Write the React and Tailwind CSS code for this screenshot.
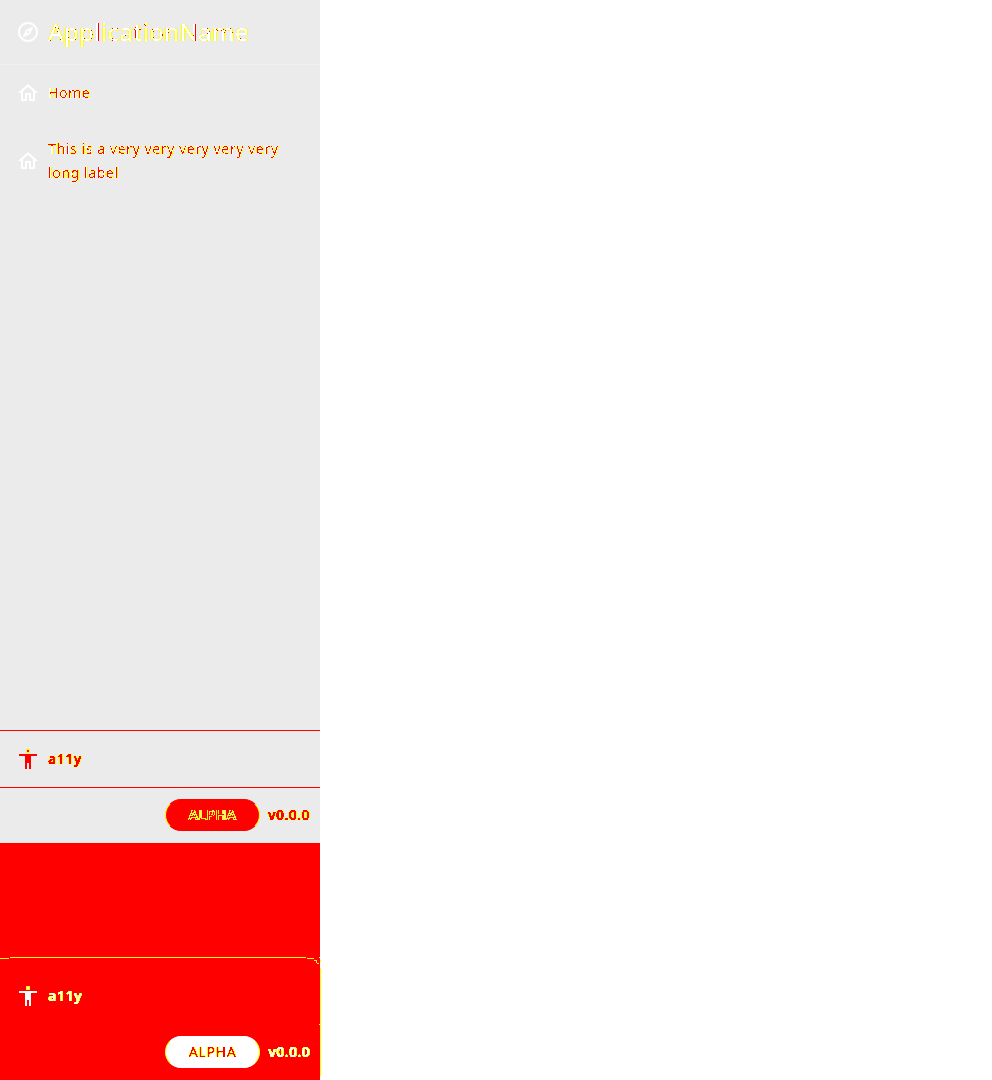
import React from 'react';
import { MdOutlineExplore, MdOutlineHome } from 'react-icons/md';

// Edge filters: partially covered pixels turn yellow, covered ones take the tone's core colour.
function Tone({ id, g, b, a = '0 1 1 1 1 1 1 1' }) {
  return (
    <filter id={id} x="-5%" y="-10%" width="110%" height="120%" colorInterpolationFilters="sRGB">
      <feColorMatrix type="matrix" values="0 0 0 0 1  0 0 0 1 0  0 0 0 1 0  0 0 0 1 0" />
      <feComponentTransfer>
        <feFuncG type="discrete" tableValues={g} />
        <feFuncB type="discrete" tableValues={b} />
        <feFuncA type="discrete" tableValues={a} />
      </feComponentTransfer>
    </filter>
  );
}

function Person({ color }) {
  return (
    <svg viewBox="0 0 24 24" className="h-6 w-6 shrink-0" shapeRendering="crispEdges">
      <path d="M10 2h4v4h-4z" fill="#ff0" />
      <path d="M11 3h2v2h-2z" fill={color} />
      <path d="M21 9h-6v13h-2v-6h-2v6H9V9H3V7h18z" fill={color} />
    </svg>
  );
}

function NavItem({ className, children }) {
  return (
    <div className={`flex items-center gap-2 px-4 ${className}`}>
      <MdOutlineHome className="h-6 w-6 shrink-0 text-white" />
      <span className="w-[240px] text-sm leading-6 tracking-[0.6px] [filter:url(#mixed)] [text-shadow:1px_0_rgba(0,0,0,0.55)]">{children}</span>
    </div>
  );
}

export default function App() {
  return (
    <div className="h-[1080px] w-[992px] overflow-hidden bg-white font-['Noto_Sans',sans-serif]">
      <svg className="absolute h-0 w-0">
        <defs>
          <Tone id="light" g="1 1 1 1 1 1 1 1 1 0 1 1 1 1 1 1" b="0 0 0 0 0 0 0 0 0 0 1 1 1 1 1 1" />
          <Tone id="cream" g="1 1" b="0 0 0 0 0 1 1 1" />
          <Tone id="red" g="1 1 1 1 0 0 0 0" b="0 0" />
          <Tone id="mixed" g="1 1 1 1 1 1 0 0" b="0 0 0 0 1 1 0 0" />
          <Tone id="outline" g="1 1 1 1 1 0.9 0.9 0" b="0 0 0 0 0 0.7 0.7 0" />
        </defs>
      </svg>
      <aside className="relative flex h-full w-[320px] flex-col bg-[#ebebeb]">
        <header className="flex h-[65px] shrink-0 items-center gap-2 border-b border-[#f0f0f0] px-4">
          <MdOutlineExplore className="h-6 w-6 shrink-0 text-white" />
          <h1 className="whitespace-nowrap text-2xl tracking-[0.45px] [filter:url(#light)] [text-shadow:1px_0_rgba(0,0,0,0.3),-1px_0_rgba(0,0,0,0.15)]">ApplicationName</h1>
        </header>
        <nav className="flex-1">
          <NavItem className="h-14">Home</NavItem>
          <NavItem className="h-20">This is a very very very very very long label</NavItem>
        </nav>
        <div className="flex h-[58px] shrink-0 items-center gap-2 border-y border-[#f00] px-4">
          <Person color="#f00" />
          <span className="text-sm font-semibold tracking-[0.5px] [filter:url(#red)] [text-shadow:1px_0_rgba(0,0,0,0.3),-1px_0_rgba(0,0,0,0.3)]">a11y</span>
        </div>
        <div className="flex h-[55px] shrink-0 items-center justify-end gap-2 pb-px pr-2.5">
          <div className="flex h-8 w-[95px] items-center justify-center rounded-full border border-y-[#f00] border-x-[#ff0] bg-[#f00]">
            <span className="text-sm tracking-[0.7px] [filter:url(#outline)] [text-shadow:1px_0_rgba(0,0,0,0.4),-1px_0_rgba(0,0,0,0.3)]">ALPHA</span>
          </div>
          <span className="w-[42px] text-sm font-semibold tracking-[0.4px] [filter:url(#red)] [text-shadow:1px_0_rgba(0,0,0,0.3),-1px_0_rgba(0,0,0,0.3)]">v0.0.0</span>
        </div>
        <footer className="flex h-[237px] shrink-0 flex-col justify-end bg-[#f00]">
          <svg viewBox="0 0 321 125" className="-mb-[112px] block h-[125px] w-[321px] shrink-0" shapeRendering="crispEdges" fill="#ff0">
            <path d="M10 2h296v1H10zM0 3h9v1H0zM307 3h7v1h-7zM314 5h3v1h-3zM316 6h1v2h-1zM317 8h2v1h-2zM319 2h1v1h-1zM320 5h1v2h-1zM320 13h1v108h-1zM319 69h1v1h-1z" />
          </svg>
          <div className="flex h-14 shrink-0 items-center gap-2 px-4">
            <Person color="#fff" />
            <span className="text-sm font-semibold tracking-[0.5px] [filter:url(#cream)] [text-shadow:1px_0_rgba(0,0,0,0.3)]">a11y</span>
          </div>
          <div className="flex h-14 shrink-0 items-center justify-end gap-2 pr-2.5">
            <div className="flex h-8 w-[95px] items-center justify-center rounded-full border border-[#ff0] border-y-white bg-white">
              <span className="text-sm tracking-[0.7px] [filter:url(#red)] [text-shadow:1px_0_rgba(0,0,0,0.25)]">ALPHA</span>
            </div>
            <span className="w-[42px] text-sm font-semibold tracking-[0.4px] [filter:url(#cream)] [text-shadow:1px_0_rgba(0,0,0,0.3)]">v0.0.0</span>
          </div>
        </footer>
      </aside>
    </div>
  );
}
